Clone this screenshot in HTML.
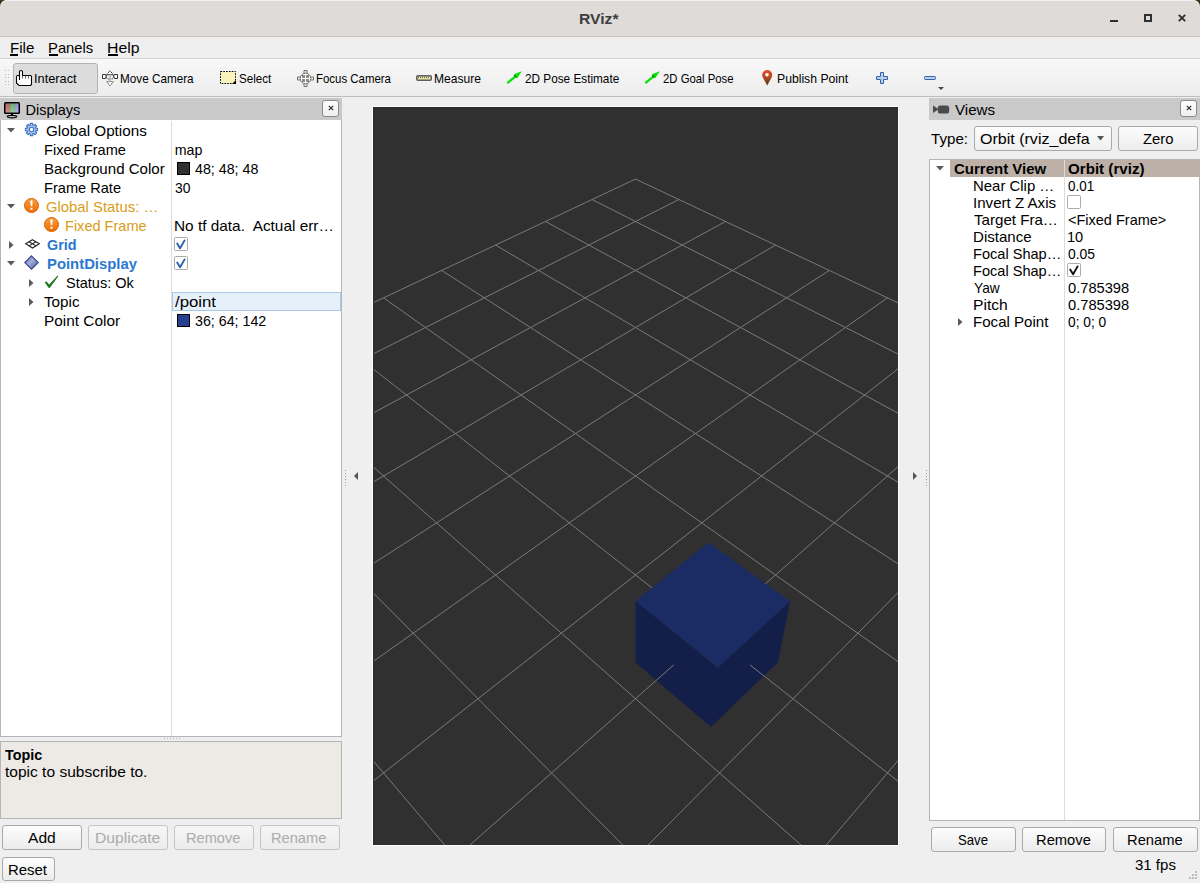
<!DOCTYPE html><html><head><meta charset="utf-8"><style>html,body{margin:0;padding:0;width:1200px;height:883px;overflow:hidden;background:#efefef}body{position:relative;font-family:"Liberation Sans", sans-serif}.t{position:absolute;white-space:pre;line-height:1;transform-origin:0 0}</style></head><body><div style="position:absolute;left:0px;top:0px;width:1200px;height:883px;background:#efefef"></div>
<div style="position:absolute;left:0px;top:0px;width:8px;height:8px;background:#3e3420"></div>
<div style="position:absolute;left:1192px;top:0px;width:8px;height:8px;background:#3e3420"></div>
<div style="position:absolute;left:0px;top:0px;width:1200px;height:36px;background:#dfdbd8;border-radius:7px 7px 0 0;box-shadow:inset 0 1px 0 #f4f2f0"></div>
<div style="position:absolute;left:0px;top:36px;width:1200px;height:1px;background:#c9c5c1"></div>
<span class="t" style="transform:scaleX(1.0470);left:579.25px;top:11.00px;font-size:15px;font-weight:700;color:#3d3d3d;">RViz*</span>
<div style="position:absolute;left:1110px;top:20px;width:8px;height:2px;background:#2c3032"></div>
<div style="position:absolute;left:1144px;top:14px;width:8px;height:8px;box-sizing:border-box;border:2px solid #2c3032"></div>
<svg style="position:absolute;left:1177px;top:13px" width="11" height="11"><path d="M1.8 1.8 L8.2 8.2 M8.2 1.8 L1.8 8.2" stroke="#2c3032" stroke-width="1.9"/></svg>
<div style="position:absolute;left:0px;top:37px;width:1200px;height:21px;background:#efefef"></div>
<span class="t" style="transform:scaleX(1.0448);left:9.66px;top:41.00px;font-size:14.5px;font-weight:400;color:#000;">File</span>
<span class="t" style="transform:scaleX(1.0212);left:48.28px;top:41.00px;font-size:14.5px;font-weight:400;color:#000;">Panels</span>
<span class="t" style="transform:scaleX(1.0884);left:106.91px;top:41.00px;font-size:14.5px;font-weight:400;color:#000;">Help</span>
<div style="position:absolute;left:10px;top:54px;width:8px;height:2px;background:#000"></div>
<div style="position:absolute;left:49px;top:54px;width:9px;height:2px;background:#000"></div>
<div style="position:absolute;left:108px;top:54px;width:10px;height:2px;background:#000"></div>
<div style="position:absolute;left:0px;top:58px;width:1200px;height:1px;background:#d4d4d4"></div>
<div style="position:absolute;left:0px;top:59px;width:1200px;height:37px;background:linear-gradient(#f8f8f8,#ededed)"></div>
<div style="position:absolute;left:0px;top:96px;width:1200px;height:1px;background:#bdbdbd"></div>
<div style="position:absolute;left:5px;top:70.0px;width:1px;height:1px;background:#b8b8b8"></div>
<div style="position:absolute;left:8px;top:70.0px;width:1px;height:1px;background:#b8b8b8"></div>
<div style="position:absolute;left:5px;top:73.6px;width:1px;height:1px;background:#b8b8b8"></div>
<div style="position:absolute;left:8px;top:73.6px;width:1px;height:1px;background:#b8b8b8"></div>
<div style="position:absolute;left:5px;top:77.2px;width:1px;height:1px;background:#b8b8b8"></div>
<div style="position:absolute;left:8px;top:77.2px;width:1px;height:1px;background:#b8b8b8"></div>
<div style="position:absolute;left:5px;top:80.8px;width:1px;height:1px;background:#b8b8b8"></div>
<div style="position:absolute;left:8px;top:80.8px;width:1px;height:1px;background:#b8b8b8"></div>
<div style="position:absolute;left:5px;top:84.4px;width:1px;height:1px;background:#b8b8b8"></div>
<div style="position:absolute;left:8px;top:84.4px;width:1px;height:1px;background:#b8b8b8"></div>
<div style="position:absolute;left:13px;top:63px;width:85px;height:31px;box-sizing:border-box;background:#dcdcdc;border:1px solid #b3b3b3;border-radius:3px"></div>
<svg style="position:absolute;left:16px;top:70px;overflow:visible" width="17" height="17" viewBox="0 0 17 17"><path d="M3.5 10V1.8Q3.5 0.5 5 0.5Q6.5 0.5 6.5 1.8V5.5H14.5Q15.5 5.5 15.5 6.5V14.2L14.5 15.5H3L0.5 13V6.8Q0.5 5.5 1.8 5.5H3.5" fill="#fff" stroke="#000" stroke-width="1.1"/><path d="M6.5 5.5V8.5M9.5 5.5V8.5M12.5 5.5V8.5" stroke="#555" stroke-width="0.9"/></svg>
<span class="t" style="transform:scaleX(0.9826);left:34.02px;top:72.00px;font-size:13px;font-weight:400;color:#000;">Interact</span>
<svg style="position:absolute;left:102px;top:70px;overflow:visible" width="17" height="17" viewBox="0 0 17 17"><g stroke="#333" stroke-width="1" fill="#fff"><path d="M0.5 4.5H3.5L4.5 6.5L3.5 8.5H0.5Z"/><path d="M15.5 4.5H12.5L11.5 6.5L12.5 8.5H15.5Z"/><path d="M8 0.8L4.6 4.6H11.4Z" stroke-dasharray="1.4 0.6"/><ellipse cx="8" cy="6.8" rx="4.2" ry="2.3" fill="none" stroke-dasharray="1.4 0.6"/><path d="M8 15.8L4.6 11.6H11.4Z" stroke="#5a5a5a" stroke-dasharray="1.4 0.6"/></g><path d="M8 4.6V11.6" stroke="#b4b4b4" stroke-width="1.6"/></svg>
<span class="t" style="transform:scaleX(0.9016);left:120.20px;top:72.00px;font-size:13px;font-weight:400;color:#000;">Move Camera</span>
<svg style="position:absolute;left:220px;top:71px;overflow:visible" width="16" height="13" viewBox="0 0 16 13"><rect x="0.5" y="0.5" width="15" height="12" fill="#fbf3bc" stroke="#000" stroke-dasharray="1.6 1.2"/><path d="M16 9L16 13L12 13Z" fill="#000"/></svg>
<span class="t" style="transform:scaleX(0.8927);left:239.10px;top:72.00px;font-size:13px;font-weight:400;color:#000;">Select</span>
<svg style="position:absolute;left:297px;top:70px;overflow:visible" width="17" height="17" viewBox="0 0 17 17"><g stroke="#6e6e6e" stroke-width="1" fill="#fff"><path d="M7 0.5H10V3.5M7 0.5V3.5M7 16.5H10V13.5M7 16.5V13.5M0.5 7H3.5M0.5 7V10H3.5M16.5 7H13.5M16.5 7V10H13.5" fill="none"/><circle cx="8.5" cy="8.5" r="5.3"/></g><g fill="#8a8a8a"><rect x="5" y="5" width="3" height="3"/><rect x="9" y="5" width="3" height="3"/><rect x="5" y="9" width="3" height="3"/><rect x="9" y="9" width="3" height="3"/></g></svg>
<span class="t" style="transform:scaleX(0.8786);left:316.22px;top:72.00px;font-size:13px;font-weight:400;color:#000;">Focus Camera</span>
<svg style="position:absolute;left:416px;top:75px;overflow:visible" width="16" height="6" viewBox="0 0 16 6"><rect x="0.75" y="0.75" width="14.5" height="4.5" rx="1" fill="#f2e8a8" stroke="#5e5e5e" stroke-width="1.5"/><path d="M2.5 1.5V3.2M4.5 1.5V3.2M6.5 1.5V3.2M8.5 1.5V3.2M10.5 1.5V3.2M12.5 1.5V3.2" stroke="#6a6a6a" stroke-width="1"/></svg>
<span class="t" style="transform:scaleX(0.9281);left:433.87px;top:72.00px;font-size:13px;font-weight:400;color:#000;">Measure</span>
<svg style="position:absolute;left:506px;top:70px;overflow:visible" width="17" height="15" viewBox="0 0 17 15"><path d="M0.6 12.25L8.87 5.44L7.98 4.36L15.75 1.2L11.16 8.22L10.27 7.14L2 13.95Z" fill="#00e400"/><path d="M8.2 5.2L10.6 7.6" stroke="#0b6e0b" stroke-width="1.3"/></svg>
<span class="t" style="transform:scaleX(0.9055);left:525.20px;top:72.00px;font-size:13px;font-weight:400;color:#000;">2D Pose Estimate</span>
<svg style="position:absolute;left:644px;top:70px;overflow:visible" width="17" height="15" viewBox="0 0 17 15"><path d="M0.6 12.25L8.87 5.44L7.98 4.36L15.75 1.2L11.16 8.22L10.27 7.14L2 13.95Z" fill="#00e400"/><path d="M8.2 5.2L10.6 7.6" stroke="#0b6e0b" stroke-width="1.3"/></svg>
<span class="t" style="transform:scaleX(0.8723);left:663.20px;top:72.00px;font-size:13px;font-weight:400;color:#000;">2D Goal Pose</span>
<svg style="position:absolute;left:762px;top:70px;overflow:visible" width="11" height="16" viewBox="0 0 11 16"><defs><linearGradient id="pg" x1="0" y1="0" x2="0" y2="1"><stop offset="0" stop-color="#e84a28"/><stop offset="0.5" stop-color="#b04a22"/><stop offset="1" stop-color="#4a3a10"/></linearGradient></defs><path d="M5.2 15.5L1.2 8.2Q0 6.2 0.2 5A5 5 0 0 1 10.2 5Q10.4 6.2 9.2 8.2Z" fill="url(#pg)"/><circle cx="5" cy="4.7" r="1.8" fill="#fff"/></svg>
<span class="t" style="transform:scaleX(0.9380);left:776.86px;top:72.00px;font-size:13px;font-weight:400;color:#000;">Publish Point</span>
<svg style="position:absolute;left:876px;top:72px;overflow:visible" width="12" height="12" viewBox="0 0 12 12"><path d="M4.5 0.5H7.5V4.5H11.5V7.5H7.5V11.5H4.5V7.5H0.5V4.5H4.5Z" fill="#b9d0ee" stroke="#3563a9" stroke-width="1"/></svg>
<svg style="position:absolute;left:924px;top:76px;overflow:visible" width="12" height="4" viewBox="0 0 12 4"><rect x="0.5" y="0.5" width="11" height="3" rx="0.8" fill="#b9d0ee" stroke="#3563a9" stroke-width="1"/></svg>
<svg style="position:absolute;left:938px;top:87px;overflow:visible" width="6" height="3" viewBox="0 0 6 3"><path d="M0 0H6L3 3Z" fill="#444"/></svg>
<div style="position:absolute;left:0px;top:98px;width:342px;height:22px;background:#c9c9c9"></div>
<svg style="position:absolute;left:4px;top:102px;overflow:visible" width="17" height="17" viewBox="0 0 17 17"><defs><linearGradient id="mg" x1="0" y1="0" x2="0" y2="1"><stop offset="0" stop-color="#000" stop-opacity="0.12"/><stop offset="1" stop-color="#fff" stop-opacity="0.15"/></linearGradient></defs><rect x="0" y="0" width="16" height="12" rx="1.5" fill="#000"/><rect x="1.5" y="1.5" width="4.6" height="9" fill="#cf7878"/><rect x="6.1" y="1.5" width="4.8" height="9" fill="#7ccc7c"/><rect x="10.9" y="1.5" width="3.6" height="9" fill="#a4a4ee"/><rect x="1.5" y="1.5" width="13" height="9" fill="url(#mg)"/><path d="M7 12H9V13.5H7Z" fill="#000"/><ellipse cx="8" cy="14.6" rx="4.8" ry="1.25" fill="none" stroke="#000" stroke-width="1.1"/></svg>
<span class="t" style="left:25.50px;top:103.00px;font-size:14.5px;font-weight:400;color:#000;">Displays</span>
<div style="position:absolute;left:322px;top:100px;width:17px;height:17px;box-sizing:border-box;border:1px solid #8c8c8c;border-radius:3px;background:linear-gradient(#fdfdfd,#efefef)"></div>
<svg style="position:absolute;left:328px;top:105px;overflow:visible" width="6" height="6" viewBox="0 0 6 6"><path d="M0.8 0.8L5.2 5.2M5.2 0.8L0.8 5.2" stroke="#2a2a2a" stroke-width="1.15"/></svg>
<div style="position:absolute;left:0px;top:120px;width:342px;height:617px;box-sizing:border-box;background:#fff;border:1px solid #b5b5b5;border-top:none"></div>
<div style="position:absolute;left:171px;top:121px;width:1px;height:615px;background:#dcdcdc"></div>
<svg style="position:absolute;left:7px;top:128px;overflow:visible" width="8" height="5" viewBox="0 0 8 5"><path d="M0 0H8L4 4.5Z" fill="#5a5a5a"/></svg>
<svg style="position:absolute;left:24px;top:122px;overflow:visible" width="15" height="15" viewBox="0 0 15 15"><path d="M6.18 3.20 L6.32 1.41 L8.68 1.41 L8.82 3.20 L9.61 3.53 L10.97 2.36 L12.64 4.03 L11.47 5.39 L11.80 6.18 L13.59 6.32 L13.59 8.68 L11.80 8.82 L11.47 9.61 L12.64 10.97 L10.97 12.64 L9.61 11.47 L8.82 11.80 L8.68 13.59 L6.32 13.59 L6.18 11.80 L5.39 11.47 L4.03 12.64 L2.36 10.97 L3.53 9.61 L3.20 8.82 L1.41 8.68 L1.41 6.32 L3.20 6.18 L3.53 5.39 L2.36 4.03 L4.03 2.36 L5.39 3.53Z" fill="#a9c3e6" stroke="#3a72c2" stroke-width="1.1" stroke-linejoin="round"/><circle cx="7.5" cy="7.5" r="2.2" fill="#fff" stroke="#3a72c2" stroke-width="1.1"/></svg>
<span class="t" style="transform:scaleX(1.0741);left:46.40px;top:124.00px;font-size:14.2px;font-weight:400;color:#000;">Global Options</span>
<span class="t" style="transform:scaleX(1.0288);left:43.67px;top:143.00px;font-size:14.2px;font-weight:400;color:#000;">Fixed Frame</span>
<span class="t" style="left:174.75px;top:143.00px;font-size:14.2px;font-weight:400;color:#000;">map</span>
<span class="t" style="transform:scaleX(1.0635);left:43.64px;top:162.00px;font-size:14.2px;font-weight:400;color:#000;">Background Color</span>
<div style="position:absolute;left:177px;top:162px;width:13px;height:13px;box-sizing:border-box;background:#303030;border:1px solid #000"></div>
<span class="t" style="transform:scaleX(1.0044);left:194.50px;top:162.00px;font-size:14.2px;font-weight:400;color:#000;">48; 48; 48</span>
<span class="t" style="transform:scaleX(1.0282);left:43.67px;top:181.00px;font-size:14.2px;font-weight:400;color:#000;">Frame Rate</span>
<span class="t" style="transform:scaleX(0.9754);left:174.75px;top:181.00px;font-size:14.2px;font-weight:400;color:#000;">30</span>
<svg style="position:absolute;left:7px;top:204px;overflow:visible" width="8" height="5" viewBox="0 0 8 5"><path d="M0 0H8L4 4.5Z" fill="#5a5a5a"/></svg>
<svg style="position:absolute;left:24.0px;top:198.0px;overflow:visible" width="15" height="15" viewBox="0 0 15 15"><defs><linearGradient id="wg" x1="0" y1="0" x2="0" y2="1"><stop offset="0" stop-color="#f8a040"/><stop offset="1" stop-color="#f06a00"/></linearGradient></defs><circle cx="7.5" cy="7.5" r="7" fill="url(#wg)" stroke="#d86208" stroke-width="1"/><path d="M6.3 2.6H8.7L8.2 8.3H6.8Z" fill="#fff"/><rect x="6.5" y="9.8" width="2" height="2" fill="#fff"/></svg>
<span class="t" style="transform:scaleX(1.0466);left:46.20px;top:200.00px;font-size:14.2px;font-weight:400;color:#d99d17;">Global Status: …</span>
<svg style="position:absolute;left:43.8px;top:216.9px;overflow:visible" width="15" height="15" viewBox="0 0 15 15"><defs><linearGradient id="wg" x1="0" y1="0" x2="0" y2="1"><stop offset="0" stop-color="#f8a040"/><stop offset="1" stop-color="#f06a00"/></linearGradient></defs><circle cx="7.5" cy="7.5" r="7" fill="url(#wg)" stroke="#d86208" stroke-width="1"/><path d="M6.3 2.6H8.7L8.2 8.3H6.8Z" fill="#fff"/><rect x="6.5" y="9.8" width="2" height="2" fill="#fff"/></svg>
<span class="t" style="transform:scaleX(1.0250);left:65.28px;top:219.00px;font-size:14.2px;font-weight:400;color:#d99d17;">Fixed Frame</span>
<span class="t" style="transform:scaleX(1.0838);left:173.67px;top:219.00px;font-size:14.2px;font-weight:400;color:#000;">No tf data.&nbsp; Actual err…</span>
<svg style="position:absolute;left:9px;top:241px;overflow:visible" width="5" height="8" viewBox="0 0 5 8"><path d="M0 0V8L4.5 4Z" fill="#5a5a5a"/></svg>
<svg style="position:absolute;left:25px;top:239px;overflow:visible" width="15" height="10" viewBox="0 0 15 10"><g fill="none" stroke="#222" stroke-width="1.1"><path d="M7.5 0.7L14.3 4.8L7.5 9L0.7 4.8Z"/><path d="M4.1 2.75L10.9 6.9M10.9 2.75L4.1 6.9"/></g></svg>
<span class="t" style="transform:scaleX(1.0141);left:46.90px;top:238.00px;font-size:14.2px;font-weight:700;color:#2a78cf;">Grid</span>
<div style="position:absolute;left:174px;top:237px;width:14px;height:14px;box-sizing:border-box;background:#fff;border:1px solid #ababab;border-radius:1.5px"></div>
<svg style="position:absolute;left:174px;top:237px;overflow:visible" width="14" height="14" viewBox="0 0 14 14"><path d="M3.2 6.6L6.1 11.2L10.6 3.4" fill="none" stroke="#2a62aa" stroke-width="1.9" stroke-linecap="round" stroke-linejoin="round"/></svg>
<svg style="position:absolute;left:7px;top:261px;overflow:visible" width="8" height="5" viewBox="0 0 8 5"><path d="M0 0H8L4 4.5Z" fill="#5a5a5a"/></svg>
<svg style="position:absolute;left:24px;top:255px;overflow:visible" width="15" height="15" viewBox="0 0 15 15"><defs><linearGradient id="dg" x1="0" y1="0" x2="1" y2="1"><stop offset="0" stop-color="#5666a6"/><stop offset="0.45" stop-color="#a4b0d8"/><stop offset="0.6" stop-color="#8894c4"/><stop offset="1" stop-color="#4e5e9e"/></linearGradient></defs><path d="M7.5 0.8L14.2 7.5L7.5 14.2L0.8 7.5Z" fill="url(#dg)" stroke="#354590" stroke-width="1.1"/></svg>
<span class="t" style="transform:scaleX(1.0472);left:46.60px;top:257.00px;font-size:14.2px;font-weight:700;color:#2a78cf;">PointDisplay</span>
<div style="position:absolute;left:174px;top:256px;width:14px;height:14px;box-sizing:border-box;background:#fff;border:1px solid #ababab;border-radius:1.5px"></div>
<svg style="position:absolute;left:174px;top:256px;overflow:visible" width="14" height="14" viewBox="0 0 14 14"><path d="M3.2 6.6L6.1 11.2L10.6 3.4" fill="none" stroke="#2a62aa" stroke-width="1.9" stroke-linecap="round" stroke-linejoin="round"/></svg>
<svg style="position:absolute;left:29px;top:279px;overflow:visible" width="5" height="8" viewBox="0 0 5 8"><path d="M0 0V8L4.5 4Z" fill="#5a5a5a"/></svg>
<svg style="position:absolute;left:44px;top:275px;overflow:visible" width="15" height="14" viewBox="0 0 15 14"><path d="M0.8 7.6L2.3 6.3L5.1 9.5L13.6 0.5L14.3 1.2L5.7 12.9H4.8Z" fill="#1b7a1b"/></svg>
<span class="t" style="transform:scaleX(1.0232);left:66.30px;top:276.00px;font-size:14.2px;font-weight:400;color:#000;">Status: Ok</span>
<div style="position:absolute;left:172px;top:292px;width:169px;height:19px;box-sizing:border-box;background:#e6f0fa;border:1px solid #a9c8ea"></div>
<svg style="position:absolute;left:29px;top:298px;overflow:visible" width="5" height="8" viewBox="0 0 5 8"><path d="M0 0V8L4.5 4Z" fill="#5a5a5a"/></svg>
<span class="t" style="transform:scaleX(1.0749);left:44.40px;top:295.00px;font-size:14.2px;font-weight:400;color:#000;">Topic</span>
<span class="t" style="transform:scaleX(1.1793);left:174.75px;top:295.00px;font-size:14.2px;font-weight:400;color:#000;">/point</span>
<span class="t" style="transform:scaleX(1.0841);left:43.62px;top:314.00px;font-size:14.2px;font-weight:400;color:#000;">Point Color</span>
<div style="position:absolute;left:177px;top:314px;width:13px;height:13px;box-sizing:border-box;background:#24408e;border:1px solid #000"></div>
<span class="t" style="transform:scaleX(1.0041);left:194.50px;top:314.00px;font-size:14.2px;font-weight:400;color:#000;">36; 64; 142</span>
<div style="position:absolute;left:164px;top:738px;width:1px;height:1px;background:#b0b0b0"></div>
<div style="position:absolute;left:167px;top:738px;width:1px;height:1px;background:#b0b0b0"></div>
<div style="position:absolute;left:170px;top:738px;width:1px;height:1px;background:#b0b0b0"></div>
<div style="position:absolute;left:173px;top:738px;width:1px;height:1px;background:#b0b0b0"></div>
<div style="position:absolute;left:176px;top:738px;width:1px;height:1px;background:#b0b0b0"></div>
<div style="position:absolute;left:179px;top:738px;width:1px;height:1px;background:#b0b0b0"></div>
<div style="position:absolute;left:0px;top:741px;width:342px;height:78px;box-sizing:border-box;background:#edeae6;border:1px solid #b5b5b5"></div>
<span class="t" style="transform:scaleX(1.0139);left:5.30px;top:748.00px;font-size:14.2px;font-weight:700;color:#000;">Topic</span>
<span class="t" style="transform:scaleX(1.0946);left:5.30px;top:765.00px;font-size:14.2px;font-weight:400;color:#000;">topic to subscribe to.</span>
<div style="position:absolute;left:2px;top:825px;width:80px;height:25px;box-sizing:border-box;border:1px solid #a9a9a9;border-radius:3px;background:linear-gradient(#fcfcfc,#ececec)"></div>
<span class="t" style="transform:scaleX(1.0964);left:28.30px;top:831.00px;font-size:14.2px;font-weight:400;color:#000;">Add</span>
<div style="position:absolute;left:88px;top:825px;width:80px;height:25px;box-sizing:border-box;border:1px solid #c4c4c4;border-radius:3px;background:linear-gradient(#f6f6f6,#ececec)"></div>
<span class="t" style="transform:scaleX(1.1037);left:94.60px;top:831.00px;font-size:14.2px;font-weight:400;color:#ababab;">Duplicate</span>
<div style="position:absolute;left:174px;top:825px;width:80px;height:25px;box-sizing:border-box;border:1px solid #c4c4c4;border-radius:3px;background:linear-gradient(#f6f6f6,#ececec)"></div>
<span class="t" style="transform:scaleX(1.0281);left:186.27px;top:831.00px;font-size:14.2px;font-weight:400;color:#ababab;">Remove</span>
<div style="position:absolute;left:260px;top:825px;width:80px;height:25px;box-sizing:border-box;border:1px solid #c4c4c4;border-radius:3px;background:linear-gradient(#f6f6f6,#ececec)"></div>
<span class="t" style="transform:scaleX(1.0316);left:271.27px;top:831.00px;font-size:14.2px;font-weight:400;color:#ababab;">Rename</span>
<div style="position:absolute;left:2px;top:857px;width:53px;height:24px;box-sizing:border-box;border:1px solid #a9a9a9;border-radius:3px;background:linear-gradient(#fcfcfc,#ececec)"></div>
<span class="t" style="transform:scaleX(1.0520);left:8.25px;top:863.00px;font-size:14.2px;font-weight:400;color:#000;">Reset</span>
<div style="position:absolute;left:345px;top:469.5px;width:1px;height:1px;background:#a0a0a0"></div>
<div style="position:absolute;left:345px;top:472.5px;width:1px;height:1px;background:#a0a0a0"></div>
<div style="position:absolute;left:345px;top:475.5px;width:1px;height:1px;background:#a0a0a0"></div>
<div style="position:absolute;left:345px;top:478.5px;width:1px;height:1px;background:#a0a0a0"></div>
<div style="position:absolute;left:345px;top:481.5px;width:1px;height:1px;background:#a0a0a0"></div>
<div style="position:absolute;left:345px;top:484.5px;width:1px;height:1px;background:#a0a0a0"></div>
<svg style="position:absolute;left:354px;top:472px;overflow:visible" width="5" height="8" viewBox="0 0 5 8"><path d="M4 0V8L0 4Z" fill="#555"/></svg>
<div style="position:absolute;left:926px;top:469.5px;width:1px;height:1px;background:#a0a0a0"></div>
<div style="position:absolute;left:926px;top:472.5px;width:1px;height:1px;background:#a0a0a0"></div>
<div style="position:absolute;left:926px;top:475.5px;width:1px;height:1px;background:#a0a0a0"></div>
<div style="position:absolute;left:926px;top:478.5px;width:1px;height:1px;background:#a0a0a0"></div>
<div style="position:absolute;left:926px;top:481.5px;width:1px;height:1px;background:#a0a0a0"></div>
<div style="position:absolute;left:926px;top:484.5px;width:1px;height:1px;background:#a0a0a0"></div>
<svg style="position:absolute;left:913px;top:472px;overflow:visible" width="5" height="8" viewBox="0 0 5 8"><path d="M0 0V8L4 4Z" fill="#555"/></svg>
<div style="position:absolute;left:372px;top:106px;width:527px;height:740px;background:#fff"></div>
<div style="position:absolute;left:373px;top:107px;width:525px;height:738px;background:#303030;overflow:hidden"><svg width="525" height="738" viewBox="0 0 525 738" style="position:absolute;left:0;top:0"><g stroke="#7a7a7b" stroke-width="1" fill="none"><line x1="262.50" y1="72.05" x2="-367.42" y2="369.00"/><line x1="262.50" y1="72.05" x2="892.42" y2="369.00"/><line x1="305.94" y1="92.53" x2="-334.27" y2="415.89"/><line x1="219.06" y1="92.53" x2="859.27" y2="415.89"/><line x1="352.49" y1="114.47" x2="-297.43" y2="467.98"/><line x1="172.51" y1="114.47" x2="822.43" y2="467.98"/><line x1="402.48" y1="138.04" x2="-256.26" y2="526.21"/><line x1="122.52" y1="138.04" x2="781.26" y2="526.21"/><line x1="456.32" y1="163.42" x2="-209.94" y2="591.71"/><line x1="68.68" y1="163.42" x2="734.94" y2="591.71"/><line x1="514.47" y1="190.83" x2="-157.45" y2="665.95"/><line x1="10.53" y1="190.83" x2="682.45" y2="665.95"/><line x1="577.46" y1="220.53" x2="-97.46" y2="750.79"/><line x1="-52.46" y1="220.53" x2="298.50" y2="496.26"/><line x1="645.93" y1="252.80" x2="370.49" y2="496.26"/></g><polygon points="335.35,435.60 262.50,494.37 344.88,560.82 417.15,494.37" fill="#1b2b63"/><polygon points="262.50,555.50 337.91,619.99 404.80,555.50 417.15,494.37 344.88,560.82 262.50,494.37" fill="#131f48"/><g stroke="#7a7a7b" stroke-width="1" fill="none"><line x1="377.03" y1="557.97" x2="622.46" y2="750.79"/><line x1="300.68" y1="557.97" x2="-28.23" y2="848.69"/><line x1="-120.93" y1="252.80" x2="553.23" y2="848.69"/><line x1="720.63" y1="288.01" x2="52.53" y2="962.90"/><line x1="-195.63" y1="288.01" x2="472.47" y2="962.90"/><line x1="802.43" y1="326.58" x2="147.97" y2="1097.87"/><line x1="-277.43" y1="326.58" x2="377.03" y2="1097.87"/><line x1="892.42" y1="369.00" x2="262.50" y2="1259.84"/><line x1="-367.42" y1="369.00" x2="262.50" y2="1259.84"/></g></svg></div>
<div style="position:absolute;left:373px;top:107px;width:525px;height:1px;background:#2a2a2a"></div>
<div style="position:absolute;left:373px;top:107px;width:1px;height:738px;background:#2a2a2a"></div>
<div style="position:absolute;left:929px;top:98px;width:271px;height:22px;background:#c9c9c9"></div>
<svg style="position:absolute;left:933px;top:105px;overflow:visible" width="17" height="9" viewBox="0 0 17 9"><path d="M0 0.5L5.5 4.2L0 8Z" fill="#4a4a4a"/><rect x="4.8" y="0.5" width="11.4" height="8" rx="2.6" fill="#4a4a4a"/></svg>
<span class="t" style="transform:scaleX(1.0428);left:955.20px;top:103.00px;font-size:14.5px;font-weight:400;color:#000;">Views</span>
<div style="position:absolute;left:1180px;top:100px;width:17px;height:17px;box-sizing:border-box;border:1px solid #8c8c8c;border-radius:3px;background:linear-gradient(#fdfdfd,#efefef)"></div>
<svg style="position:absolute;left:1186px;top:105px;overflow:visible" width="6" height="6" viewBox="0 0 6 6"><path d="M0.8 0.8L5.2 5.2M5.2 0.8L0.8 5.2" stroke="#2a2a2a" stroke-width="1.15"/></svg>
<span class="t" style="transform:scaleX(1.0664);left:931.10px;top:132.00px;font-size:14.2px;font-weight:400;color:#000;">Type:</span>
<div style="position:absolute;left:974px;top:126px;width:138px;height:25px;box-sizing:border-box;border:1px solid #a9a9a9;border-radius:3px;background:linear-gradient(#fdfdfd,#efefef)"></div>
<div style="position:absolute;left:979px;top:128px;width:111px;height:20px;overflow:hidden">
<span class="t" style="left:0.70px;top:4.00px;font-size:14.2px;font-weight:400;color:#000;transform:scaleX(1.13)">Orbit (rviz_default_plugins)</span>
</div>
<svg style="position:absolute;left:1097px;top:136px;overflow:visible" width="7" height="5" viewBox="0 0 7 5"><path d="M0 0H7L3.5 4.5Z" fill="#555"/></svg>
<div style="position:absolute;left:1118px;top:126px;width:80px;height:25px;box-sizing:border-box;border:1px solid #a9a9a9;border-radius:3px;background:linear-gradient(#fcfcfc,#ececec)"></div>
<span class="t" style="transform:scaleX(1.0450);left:1142.60px;top:132.00px;font-size:14.2px;font-weight:400;color:#000;">Zero</span>
<div style="position:absolute;left:929px;top:159px;width:271px;height:662px;box-sizing:border-box;background:#fff;border:1px solid #b5b5b5"></div>
<div style="position:absolute;left:950px;top:160px;width:249px;height:17px;background:#bdb0a7"></div>
<div style="position:absolute;left:1064px;top:160px;width:1px;height:660px;background:#dcdcdc"></div>
<svg style="position:absolute;left:936px;top:166px;overflow:visible" width="8" height="5" viewBox="0 0 8 5"><path d="M0 0H8L4 4.5Z" fill="#5a5a5a"/></svg>
<span class="t" style="transform:scaleX(1.0565);left:953.75px;top:162.00px;font-size:14.2px;font-weight:700;color:#000;">Current View</span>
<span class="t" style="transform:scaleX(1.0666);left:1067.90px;top:162.00px;font-size:14.2px;font-weight:700;color:#000;">Orbit (rviz)</span>
<span class="t" style="transform:scaleX(1.0523);left:972.70px;top:179.00px;font-size:14.2px;font-weight:400;color:#000;">Near Clip …</span>
<span class="t" style="transform:scaleX(0.9487);left:1067.90px;top:179.00px;font-size:14.2px;font-weight:400;color:#000;">0.01</span>
<span class="t" style="transform:scaleX(1.0638);left:972.69px;top:196.00px;font-size:14.2px;font-weight:400;color:#000;">Invert Z Axis</span>
<span class="t" style="transform:scaleX(1.0650);left:973.75px;top:213.00px;font-size:14.2px;font-weight:400;color:#000;">Target Fra…</span>
<span class="t" style="transform:scaleX(1.0218);left:1067.90px;top:213.00px;font-size:14.2px;font-weight:400;color:#000;">&lt;Fixed Frame&gt;</span>
<span class="t" style="transform:scaleX(1.0625);left:972.69px;top:230.00px;font-size:14.2px;font-weight:400;color:#000;">Distance</span>
<span class="t" style="transform:scaleX(1.0275);left:1066.87px;top:230.00px;font-size:14.2px;font-weight:400;color:#000;">10</span>
<span class="t" style="transform:scaleX(1.0266);left:972.72px;top:247.00px;font-size:14.2px;font-weight:400;color:#000;">Focal Shap…</span>
<span class="t" style="transform:scaleX(0.9812);left:1067.90px;top:247.00px;font-size:14.2px;font-weight:400;color:#000;">0.05</span>
<span class="t" style="transform:scaleX(1.0266);left:972.72px;top:264.00px;font-size:14.2px;font-weight:400;color:#000;">Focal Shap…</span>
<span class="t" style="transform:scaleX(0.9671);left:973.75px;top:281.00px;font-size:14.2px;font-weight:400;color:#000;">Yaw</span>
<span class="t" style="transform:scaleX(1.0340);left:1067.90px;top:281.00px;font-size:14.2px;font-weight:400;color:#000;">0.785398</span>
<span class="t" style="transform:scaleX(1.1028);left:972.65px;top:298.00px;font-size:14.2px;font-weight:400;color:#000;">Pitch</span>
<span class="t" style="transform:scaleX(1.0340);left:1067.90px;top:298.00px;font-size:14.2px;font-weight:400;color:#000;">0.785398</span>
<span class="t" style="transform:scaleX(1.0624);left:972.69px;top:315.00px;font-size:14.2px;font-weight:400;color:#000;">Focal Point</span>
<span class="t" style="transform:scaleX(0.9684);left:1067.90px;top:315.00px;font-size:14.2px;font-weight:400;color:#000;">0; 0; 0</span>
<div style="position:absolute;left:1067px;top:195px;width:14px;height:14px;box-sizing:border-box;background:#fff;border:1px solid #ababab;border-radius:1.5px"></div>
<div style="position:absolute;left:1067px;top:263px;width:14px;height:14px;box-sizing:border-box;background:#fff;border:1px solid #ababab;border-radius:1.5px"></div>
<svg style="position:absolute;left:1067px;top:263px;overflow:visible" width="14" height="14" viewBox="0 0 14 14"><path d="M3.2 6.6L6.1 11.2L10.6 3.4" fill="none" stroke="#111" stroke-width="1.9" stroke-linecap="round" stroke-linejoin="round"/></svg>
<svg style="position:absolute;left:958px;top:318px;overflow:visible" width="5" height="8" viewBox="0 0 5 8"><path d="M0 0V8L4.5 4Z" fill="#5a5a5a"/></svg>
<div style="position:absolute;left:931px;top:827px;width:85px;height:25px;box-sizing:border-box;border:1px solid #a9a9a9;border-radius:3px;background:linear-gradient(#fcfcfc,#ececec)"></div>
<span class="t" style="transform:scaleX(0.9277);left:957.90px;top:833.00px;font-size:14.2px;font-weight:400;color:#000;">Save</span>
<div style="position:absolute;left:1022px;top:827px;width:84px;height:25px;box-sizing:border-box;border:1px solid #a9a9a9;border-radius:3px;background:linear-gradient(#fcfcfc,#ececec)"></div>
<span class="t" style="transform:scaleX(1.0378);left:1036.26px;top:833.00px;font-size:14.2px;font-weight:400;color:#000;">Remove</span>
<div style="position:absolute;left:1113px;top:827px;width:85px;height:25px;box-sizing:border-box;border:1px solid #a9a9a9;border-radius:3px;background:linear-gradient(#fcfcfc,#ececec)"></div>
<span class="t" style="transform:scaleX(1.0373);left:1126.96px;top:833.00px;font-size:14.2px;font-weight:400;color:#000;">Rename</span>
<span class="t" style="transform:scaleX(1.0582);left:1134.70px;top:858.00px;font-size:14.2px;font-weight:400;color:#000;">31 fps</span>
<div style="position:absolute;left:1195px;top:871px;width:1.5px;height:1.5px;background:#bdbdbd"></div>
<div style="position:absolute;left:1192px;top:874px;width:1.5px;height:1.5px;background:#bdbdbd"></div>
<div style="position:absolute;left:1195px;top:874px;width:1.5px;height:1.5px;background:#bdbdbd"></div>
<div style="position:absolute;left:1189px;top:877px;width:1.5px;height:1.5px;background:#bdbdbd"></div>
<div style="position:absolute;left:1192px;top:877px;width:1.5px;height:1.5px;background:#bdbdbd"></div>
<div style="position:absolute;left:1195px;top:877px;width:1.5px;height:1.5px;background:#bdbdbd"></div></body></html>
